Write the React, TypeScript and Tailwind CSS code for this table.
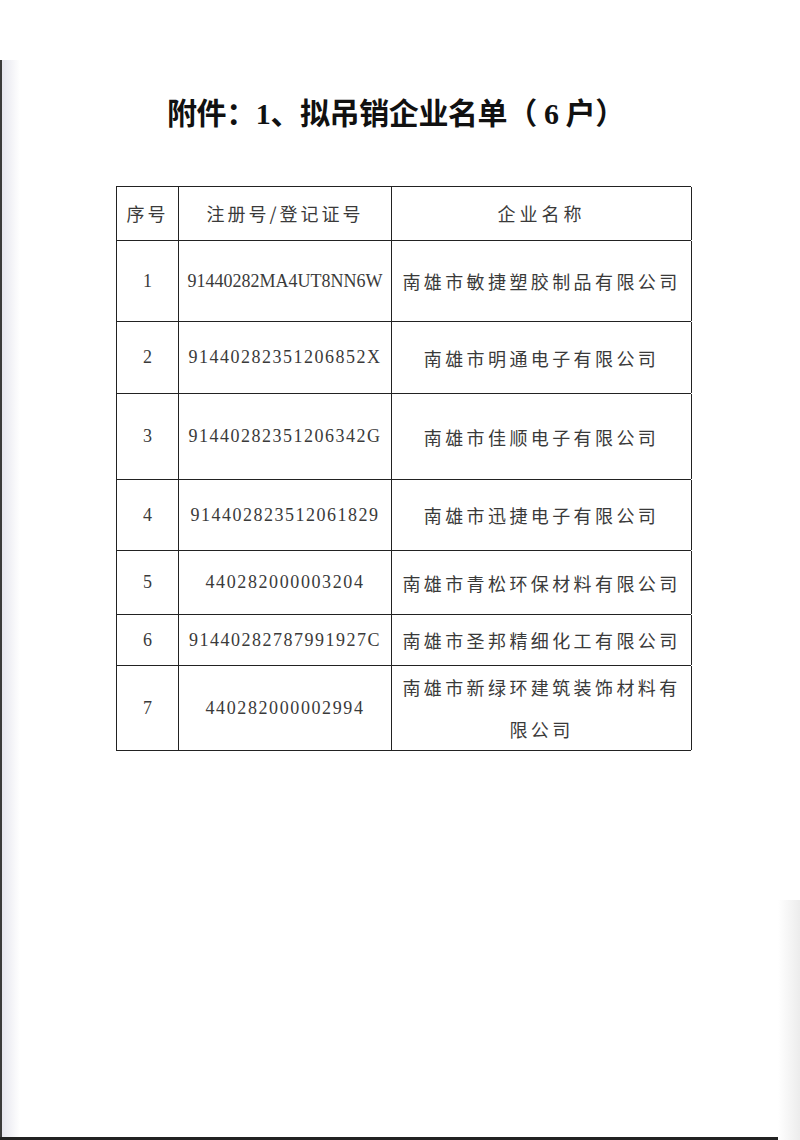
import React from "react";

const rows = [
  { n: "1", code: "91440282MA4UT8NN6W", name: ["南雄市敏捷塑胶制品有限公司"], h: "h-[81px]", t: "tracking-[0px]" },
  { n: "2", code: "91440282351206852X", name: ["南雄市明通电子有限公司"], h: "h-[72px]", t: "tracking-[1.5px]" },
  { n: "3", code: "91440282351206342G", name: ["南雄市佳顺电子有限公司"], h: "h-[86px]", t: "tracking-[1.5px]" },
  { n: "4", code: "914402823512061829", name: ["南雄市迅捷电子有限公司"], h: "h-[71px]", t: "tracking-[1.5px]" },
  { n: "5", code: "440282000003204", name: ["南雄市青松环保材料有限公司"], h: "h-[64px]", t: "tracking-[1.6px]" },
  { n: "6", code: "91440282787991927C", name: ["南雄市圣邦精细化工有限公司"], h: "h-[51px]", t: "tracking-[1.5px]" },
  { n: "7", code: "440282000002994", name: ["南雄市新绿环建筑装饰材料有", "限公司"], h: "h-[85px]", t: "tracking-[1.6px]" },
];

const cjk = "[font-family:'Noto_Sans_CJK_SC','Noto_Sans',sans-serif]";

export default function App() {
  return (
    <div className="relative w-[800px] h-[1140px] bg-white overflow-hidden">
      <div className="absolute left-0 top-[60px] bottom-0 w-[2px] bg-[#3a3a3a]" />
      <div className="absolute left-[2px] top-[60px] bottom-0 w-[18px] bg-gradient-to-r from-[#e6e6ee] to-white" />
      <div className="absolute left-0 right-0 bottom-0 h-[3px] bg-[#222]" />
      <div className="absolute right-0 top-[900px] bottom-0 w-[22px] bg-gradient-to-l from-[#ececec] to-white" />

      <div className="relative flex flex-col">
        <div className="pt-[94px] pl-[167px] h-[186px]">
          <h1 className="text-[30px] leading-[40px] font-bold text-[#111] tracking-[-0.4px] [font-family:'Liberation_Serif','Noto_Sans_CJK_SC',serif]">
            附件：1、拟吊销企业名单（ 6 户）
          </h1>
        </div>

        <div className="ml-[116px] w-[575px] border-t border-l border-[#222] text-[#3a3a3a]">
          <div className="grid grid-cols-[62px_213px_300px] h-[54px] border-b border-[#222]">
            <div className={`flex items-center justify-center border-r border-[#222] text-[18px] tracking-[3px] ${cjk}`}>序号</div>
            <div className={`flex items-center justify-center border-r border-[#222] text-[18px] tracking-[3px] ${cjk}`}>注册号/登记证号</div>
            <div className={`flex items-center justify-center border-r border-[#222] text-[18px] tracking-[4px] ${cjk}`}>企业名称</div>
          </div>
          {rows.map((r) => (
            <div key={r.n} className={`grid grid-cols-[62px_213px_300px] ${r.h} border-b border-[#222]`}>
              <div className="flex items-center justify-center border-r border-[#222] text-[18px] [font-family:'Liberation_Serif',serif]">
                {r.n}
              </div>
              <div className={`flex items-center justify-center border-r border-[#222] text-[18px] ${r.t} [font-family:'Liberation_Serif',serif]`}>
                {r.code}
              </div>
              <div className={`flex flex-col items-center justify-center border-r border-[#222] text-[18px] leading-[42px] tracking-[3.4px] ${cjk}`}>
                {r.name.map((t) => (
                  <span key={t}>{t}</span>
                ))}
              </div>
            </div>
          ))}
        </div>
      </div>
    </div>
  );
}
